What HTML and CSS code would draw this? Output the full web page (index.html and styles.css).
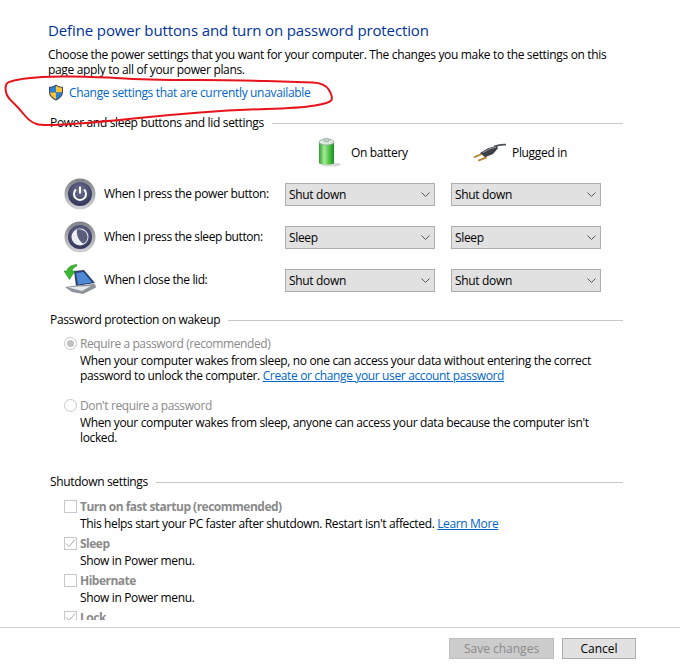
FILE: index.html
```html
<!DOCTYPE html>
<html lang="en">
<head>
  <meta charset="UTF-8">
  <title>System Settings</title>
  <link rel="stylesheet" href="styles.css">
</head>
<body>

<div class="page">
  <div class="content">
    <h2>Define power buttons and turn on password protection</h2>
    <p class="intro">Choose the power settings that you want for your computer. The changes you make to the settings on this page apply to all of your power plans.</p>

    <a class="change-link">
      <svg width="16" height="17" viewBox="0 0 16 17">
        <path d="M8 .5C6 2 3.500 2.800 1 2.800V8c0 4 3 6.800 7 8.500 4-1.700 7-4.500 7-8.500V2.800C12.500 2.800 10 2 8 .5z" fill="#3a4a5c"/>
        <path d="M8 1.800C6.300 3 4.300 3.700 2 3.800V8.500h6z" fill="#2f7fd6"/>
        <path d="M8 1.800C9.700 3 11.700 3.700 14 3.800V8.500H8z" fill="#f7c531"/>
        <path d="M2 8.500h6v6.700C4.800 13.800 2.300 11.500 2 8.500z" fill="#f7c531"/>
        <path d="M14 8.500H8v6.700c3.200-1.400 5.700-3.700 6-6.700z" fill="#2f7fd6"/>
      </svg>
      Change settings that are currently unavailable
    </a>

    <div class="section-title first"><span>Power and sleep buttons and lid settings</span></div>

    <div class="col-heads">
      <div class="col-head battery-head">
        <svg width="24" height="30" viewBox="0 0 24 30">
          <defs>
            <linearGradient id="batt" x1="0" x2="1" y1="0" y2="0">
              <stop offset="0" stop-color="#2f9e2f"/>
              <stop offset=".35" stop-color="#a8e89a"/>
              <stop offset=".7" stop-color="#46c23e"/>
              <stop offset="1" stop-color="#1f8a26"/>
            </linearGradient>
          </defs>
          <ellipse cx="13" cy="27.500" rx="10" ry="2" fill="#d8d8d8"/>
          <path d="M1 5h15v21c0 2-15 2-15 0z" fill="url(#batt)"/>
          <ellipse cx="8.500" cy="5" rx="7.500" ry="3" fill="#dfe8df" stroke="#8fa89a" stroke-width=".8"/>
          <ellipse cx="8.500" cy="3" rx="3" ry="1.800" fill="#c4cfc9" stroke="#8a9a90" stroke-width=".6"/>
        </svg>
        <span>On battery</span>
      </div>
      <div class="col-head plug-head">
        <svg width="33" height="20" viewBox="0 0 33 20">
          <path d="M33 2.700C29 2.500 25 3 21 4.500" fill="none" stroke="#50535c" stroke-width="1.800"/>
          <path d="M1 15.300L8.700 12M5.300 18.700L13.700 15.300" stroke="#b8842e" stroke-width="1.800"/>
          <path d="M23.700 3.700L15 6.300 7 11l5 4.300 8-3.300 5-5.700z" fill="#3d4047"/>
          <path d="M10 10.500l7-3.700 6-1.800" fill="none" stroke="#9a9da6" stroke-width="1"/>
        </svg>
        <span>Plugged in</span>
      </div>
    </div>

    <div class="option-row">
      <svg class="row-icon" width="32" height="32" viewBox="0 0 32 32">
        <defs>
          <radialGradient id="knob" cx=".5" cy=".35" r=".7">
            <stop offset="0" stop-color="#6f7396"/>
            <stop offset="1" stop-color="#2e3052"/>
          </radialGradient>
          <linearGradient id="ring" x1="0" x2="0" y1="0" y2="1">
            <stop offset="0" stop-color="#7f8186"/>
            <stop offset="1" stop-color="#d4d4d6"/>
          </linearGradient>
        </defs>
        <circle cx="16" cy="16" r="15.500" fill="url(#ring)"/>
        <circle cx="16" cy="16" r="12" fill="url(#knob)"/>
        <path d="M12 11.500a6 6 0 1 0 8 0" fill="none" stroke="#fff" stroke-width="2"/>
        <path d="M16 8.500v7" stroke="#fff" stroke-width="2"/>
      </svg>
      <label>When I press the power button:</label>
      <div class="combo">Shut down<svg width="9" height="5" viewBox="0 0 9 5"><path d="M.5.500l4 4 4-4" fill="none" stroke="#555"/></svg></div>
      <div class="combo">Shut down<svg width="9" height="5" viewBox="0 0 9 5"><path d="M.5.500l4 4 4-4" fill="none" stroke="#555"/></svg></div>
    </div>

    <div class="option-row">
      <svg class="row-icon" width="32" height="32" viewBox="0 0 32 32">
        <circle cx="16" cy="16" r="15.500" fill="url(#ring)"/>
        <circle cx="16" cy="16" r="12" fill="url(#knob)"/>
        <circle cx="16" cy="16" r="8.500" fill="#eceef2"/>
        <path d="M13 8.500c6-1.200 10.500 3 10.500 7.500 0 3-1.500 5.500-4 6.500-4-1.500-7.500-8-6.500-14z" fill="#5a5d7c"/>
      </svg>
      <label>When I press the sleep button:</label>
      <div class="combo">Sleep<svg width="9" height="5" viewBox="0 0 9 5"><path d="M.5.500l4 4 4-4" fill="none" stroke="#555"/></svg></div>
      <div class="combo">Sleep<svg width="9" height="5" viewBox="0 0 9 5"><path d="M.5.500l4 4 4-4" fill="none" stroke="#555"/></svg></div>
    </div>

    <div class="option-row">
      <svg class="row-icon" width="32" height="32" viewBox="0 0 32 32">
        <path d="M10 7l10-1 11 13-19 3z" fill="#2d3f6b"/>
        <path d="M12 9l7.500-1 8.500 10.500-14 2z" fill="#4f8ad6"/>
        <path d="M1 23l11-1.500L31 20l1 3.500L19 30l-11-2z" fill="#8c929a"/>
        <path d="M4 23.500l9-1 14-.5-9 5z" fill="#e6e8ea"/>
        <path d="M12.500.5C7 1 3.500 3.500 3 7H0l5.500 8.500L11 7H8c.5-2 2-4 5-5z" fill="#3ab82e" stroke="#1e7f1e" stroke-width=".5"/>
      </svg>
      <label>When I close the lid:</label>
      <div class="combo">Shut down<svg width="9" height="5" viewBox="0 0 9 5"><path d="M.5.500l4 4 4-4" fill="none" stroke="#555"/></svg></div>
      <div class="combo">Shut down<svg width="9" height="5" viewBox="0 0 9 5"><path d="M.5.500l4 4 4-4" fill="none" stroke="#555"/></svg></div>
    </div>

    <div class="section-title password"><span>Password protection on wakeup</span></div>

    <div class="choice radio-one">
      <span class="radio checked"></span>
      <div class="choice-title">Require a password (recommended)</div>
      <div class="choice-text">When your computer wakes from sleep, no one can access your data without entering the correct password to unlock the computer. <a>Create or change your user account password</a></div>
    </div>
    <div class="choice radio-two">
      <span class="radio"></span>
      <div class="choice-title">Don't require a password</div>
      <div class="choice-text">When your computer wakes from sleep, anyone can access your data because the computer isn't locked.</div>
    </div>

    <div class="section-title shutdown"><span>Shutdown settings</span></div>

    <div class="choice check-row">
      <span class="check"></span>
      <div class="choice-title bold">Turn on fast startup (recommended)</div>
      <div class="choice-text">This helps start your PC faster after shutdown. Restart isn't affected. <a>Learn More</a></div>
    </div>
    <div class="choice check-row">
      <span class="check"><svg width="13" height="13" viewBox="0 0 13 13"><path d="M2 6.500l3 3 6-7" fill="none" stroke="#a8a8a8"/></svg></span>
      <div class="choice-title bold">Sleep</div>
      <div class="choice-text">Show in Power menu.</div>
    </div>
    <div class="choice check-row">
      <span class="check"></span>
      <div class="choice-title bold">Hibernate</div>
      <div class="choice-text">Show in Power menu.</div>
    </div>
    <div class="choice check-row">
      <span class="check"><svg width="13" height="13" viewBox="0 0 13 13"><path d="M2 6.500l3 3 6-7" fill="none" stroke="#a8a8a8"/></svg></span>
      <div class="choice-title bold">Lock</div>
    </div>
  </div>

  <div class="footer">
    <button class="btn save" disabled>Save changes</button>
    <button class="btn cancel">Cancel</button>
  </div>

  <!-- hand drawn marker around the link -->
  <svg class="marker" width="340" height="130" viewBox="0 0 340 130">
    <path d="M6.500 84Q8 81 25.500 78.500 43 76 71.500 76.500 100 77 116.500 78 133 79 150 79.500 167 80 200 80 233 80 266.500 81 300 82 312.500 82.500 325 83 329 90 333 97 331.500 100 330 103 315 105.500 300 108 266.500 109 233 110 200 112.500 167 115 133.500 118.500 100 122 71.500 124 43 126 36.500 124 30 122 24 114.500 18 107 12.500 102 7 97 6 92 5 87 6.500 84z" fill="none" stroke="#e8141c" stroke-width="2"/>
  </svg>
</div>

</body>
</html>
```

FILE: styles.css
```css
* {
  box-sizing: border-box;
}
body {
  margin: 0;
  background: #fff;
  font-family: "Open Sans", Arial, sans-serif;
  font-size: 12px;
  letter-spacing: -0.33px;
  color: #000;
}
.page {
  position: relative;
  width: 680px;
  height: 668px;
  overflow: hidden;
}
.content {
  height: 620px;
  overflow: hidden;
  padding: 20px 57px 0 48px;
}
h2 {
  margin: 0;
  font-size: 15px;
  font-weight: 400;
  line-height: 20px;
  letter-spacing: -0.12px;
  color: #003399;
}
.intro {
  margin: 7px 0 0;
  line-height: 15px;
}
.change-link {
  display: flex;
  align-items: center;
  gap: 5px;
  margin-top: 5px;
  height: 20px;
  color: #0066cc;
}
.section-title {
  display: flex;
  align-items: center;
  gap: 8px;
  margin-left: 2px;
  line-height: 16px;
}
.section-title::after {
  content: "";
  flex: 1;
  height: 1px;
  background: #c8c8c8;
}
.section-title.first {
  margin-top: 13px;
}
.section-title.password {
  margin-top: 16px;
}
.section-title.shutdown {
  margin-top: 29px;
}
.col-heads {
  display: flex;
  height: 30px;
  margin-top: 6px;
  padding-left: 270px;
}
.col-head {
  display: flex;
  align-items: center;
}
.battery-head {
  width: 155px;
  gap: 9px;
}
.plug-head {
  gap: 6px;
}
.option-row {
  display: flex;
  align-items: center;
  height: 32px;
  margin: 11px 0 0 16px;
}
.row-icon {
  flex: none;
}
.option-row label {
  width: 189px;
  padding-left: 8px;
  margin-top: -1px;
  white-space: nowrap;
  letter-spacing: -0.4px;
}
.combo {
  display: flex;
  align-items: center;
  justify-content: space-between;
  width: 150px;
  height: 23px;
  margin-right: 16px;
  padding: 0 4px 0 3px;
  background: #e1e1e1;
  border: 1px solid #adadad;
}
.choice {
  position: relative;
  padding-left: 32px;
  line-height: 15px;
}
.radio-one {
  margin-top: 8px;
}
.radio-two {
  margin-top: 15px;
}
.choice-title {
  color: #8a8a8a;
  margin-bottom: 2px;
  letter-spacing: -0.4px;
}
.choice-title.bold {
  font-weight: 700;
  letter-spacing: -0.5px;
}
.choice-text {
  letter-spacing: -0.36px;
}
.choice-text a {
  color: #0066cc;
  text-decoration: underline;
}
.radio {
  position: absolute;
  left: 16px;
  top: 1px;
  width: 13px;
  height: 13px;
  border: 1px solid #c8c8c8;
  border-radius: 50%;
  background: #fff;
}
.radio.checked::after {
  content: "";
  position: absolute;
  left: 2px;
  top: 2px;
  width: 7px;
  height: 7px;
  border-radius: 50%;
  background: #c0c0c0;
}
.check {
  position: absolute;
  left: 16px;
  top: 1px;
  width: 13px;
  height: 13px;
  border: 1px solid #c8c8c8;
  background: #fff;
}
.check svg {
  display: block;
  margin: -1px;
}
.check-row {
  margin-top: 5px;
}
.section-title + .check-row {
  margin-top: 9px;
}
.footer {
  display: flex;
  justify-content: flex-end;
  gap: 8px;
  height: 41px;
  margin-top: 7px;
  padding: 10px 44px 0 0;
  border-top: 1px solid #cfcfcf;
}
.btn {
  height: 21px;
  padding: 0;
  font: inherit;
  line-height: 17px;
  border: 1px solid #adadad;
  background: #e1e1e1;
  color: #000;
}
.save {
  width: 105px;
  background: #cccccc;
  border-color: #bfbfbf;
  color: #8a8a8a;
}
.cancel {
  width: 74px;
}
.marker {
  position: absolute;
  left: 0;
  top: 0;
  pointer-events: none;
}
```
